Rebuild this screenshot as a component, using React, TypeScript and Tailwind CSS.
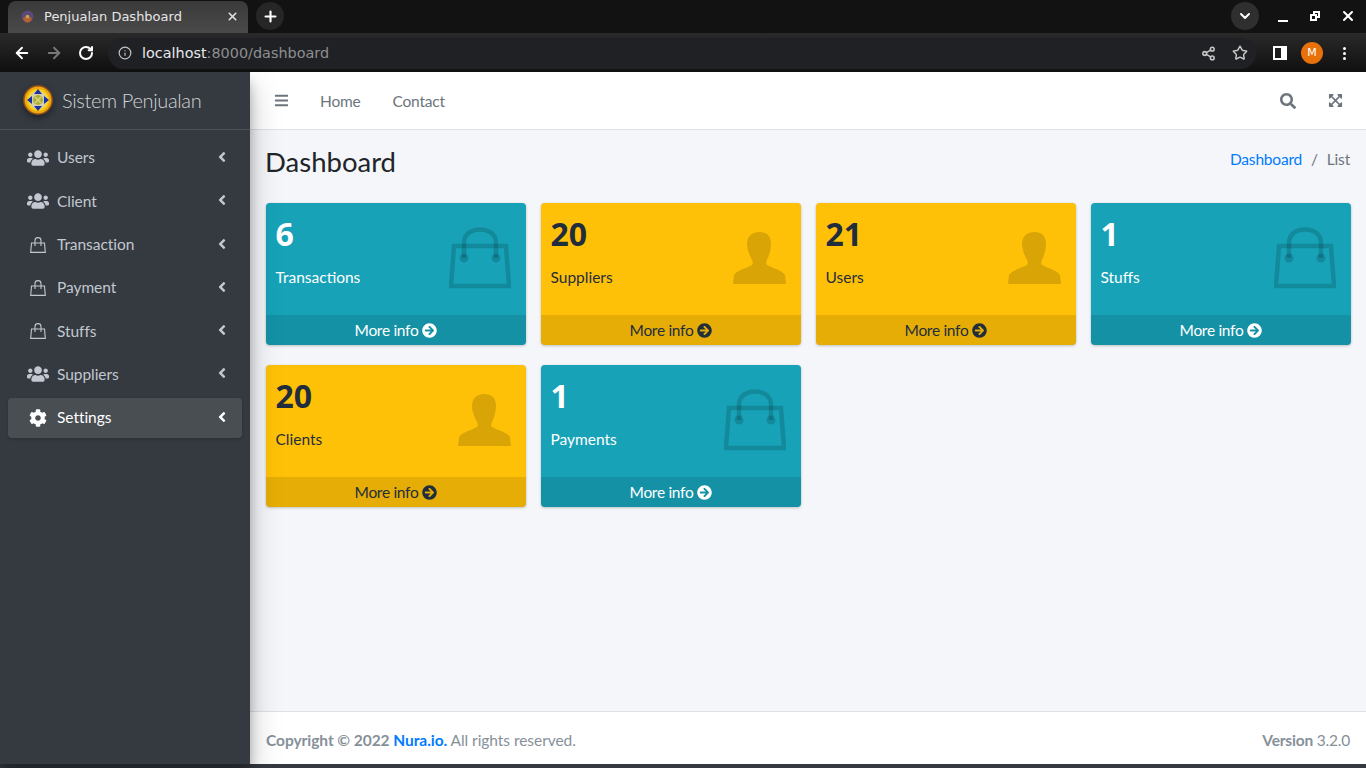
import type { ReactNode } from "react";
import {
  FaAngleLeft,
  FaArrowCircleRight,
  FaBars,
  FaCog,
  FaExpandArrowsAlt,
  FaSearch,
  FaUsers,
} from "react-icons/fa";
import { ArrowLeft, ArrowRight, ChevronDown, Info, RotateCw, Share2, Star, X, Plus } from "lucide-react";

type MenuItem = { label: string; icon: "users" | "bag" | "cog"; active?: boolean };

const menu: MenuItem[] = [
  { label: "Users", icon: "users" },
  { label: "Client", icon: "users" },
  { label: "Transaction", icon: "bag" },
  { label: "Payment", icon: "bag" },
  { label: "Stuffs", icon: "bag" },
  { label: "Suppliers", icon: "users" },
  { label: "Settings", icon: "cog", active: true },
];

type Box = { value: string; label: string; kind: "info" | "warning" };

const boxes: Box[] = [
  { value: "6", label: "Transactions", kind: "info" },
  { value: "20", label: "Suppliers", kind: "warning" },
  { value: "21", label: "Users", kind: "warning" },
  { value: "1", label: "Stuffs", kind: "info" },
  { value: "20", label: "Clients", kind: "warning" },
  { value: "1", label: "Payments", kind: "info" },
];

function MenuBagIcon() {
  return (
    <svg viewBox="0 0 16 16" className="h-[16px] w-[16px]" fill="none" stroke="currentColor" strokeWidth="1.1">
      <path d="M1.5 6h13l.8 9.4H.7z" />
      <path d="M5 9V3.5C5 1.5 6.4.6 8 .6s3 .9 3 2.9V9" />
    </svg>
  );
}

function BoxBagIcon({ className }: { className?: string }) {
  return (
    <svg viewBox="0 0 62 62" className={className} fill="none" stroke="currentColor" strokeWidth="4.5">
      <path d="M5 19h52l3 40H2z" />
      <path d="M15 31V16C15 7 22 2.500 31 2.500S47 7 47 16v15" />
      <circle cx="15" cy="31" r="4.500" fill="currentColor" stroke="none" />
      <circle cx="47" cy="31" r="4.500" fill="currentColor" stroke="none" />
    </svg>
  );
}

function PersonIcon({ className }: { className?: string }) {
  return (
    <svg viewBox="0 0 53 52" className={className} fill="currentColor">
      <path d="M26.5 0C35 0 38 5 38 12c0 6-2 12-4 16-1 2-1 4 0 5 5 3 15 5 18 10l1 9H0l1-9c3-5 13-7 18-10 1-1 1-3 0-5-2-4-5-10-5-16C14 5 18 0 26.5 0z" />
    </svg>
  );
}

function Logo() {
  return (
    <svg viewBox="0 0 30 30" className="h-[30px] w-[30px]">
      <circle cx="15" cy="15" r="15" fill="#8a4a1c" />
      <circle cx="15" cy="15" r="13.5" fill="#f0a90a" />
      <circle cx="15" cy="15" r="11" fill="#f5d21f" />
      <circle cx="15" cy="15" r="9" fill="#d9d0a8" />
      <path d="M15 4l4 5h-8zM15 26l-4-5h8zM4 15l5-4v8zM26 15l-5 4v-8z" fill="#1d2fa8" />
      <circle cx="15" cy="15" r="5" fill="#a3b045" />
      <path d="M12 12l6 6M18 12l-6 6" stroke="#e0d26a" strokeWidth="1.5" />
    </svg>
  );
}

function Favicon() {
  return (
    <svg viewBox="0 0 14 14" className="h-[13px] w-[13px]">
      <circle cx="7" cy="7" r="6.5" fill="#5b4a78" />
      <path d="M2 9c2-2 8-2 10 0-1 3-3 4.500-5 4.500S3 12 2 9z" fill="#b5622e" />
      <circle cx="7" cy="7" r="2" fill="#c9a24a" />
    </svg>
  );
}

function ChromeBar() {
  return (
    <div className="h-[72px] shrink-0 bg-[#0f0f10] font-['DejaVu_Sans',sans-serif] text-white">
      <div className="flex h-[33px] items-start bg-[#121213] pl-2">
        <div className="mt-[1px] flex h-[32px] w-[240px] items-center rounded-t-lg bg-gradient-to-b from-[#3a3a3b] to-[#4a4a4a] pb-[2px] pl-[13px] pr-[9px]">
          <Favicon />
          <span className="ml-[10px] flex-1 text-[13px] leading-none text-[#e6e6e6]">Penjualan Dashboard</span>
          <X size={13} strokeWidth={3} className="text-[#e0e0e0]" />
        </div>
        <div className="ml-[8px] mt-[2px] flex h-[28px] w-[28px] items-center justify-center rounded-full bg-[#262627]">
          <Plus size={17} strokeWidth={3} />
        </div>
        <div className="ml-auto mr-[10px] mt-[2px] flex h-[28px] items-center">
          <div className="flex h-[28px] w-[28px] items-center justify-center rounded-full bg-[#2f2f30]">
            <ChevronDown size={16} strokeWidth={3} />
          </div>
          <span className="ml-[19px] mt-[10px] h-[2px] w-[10px] bg-white" />
          <div className="relative ml-[22px] h-[10px] w-[10px]">
            <span className="absolute right-0 top-0 h-[7px] w-[7px] border-2 border-white" />
            <span className="absolute bottom-0 left-0 h-[7px] w-[7px] border-2 border-white bg-[#121213]" />
          </div>
          <X size={16} strokeWidth={3} className="ml-[20px]" />
        </div>
      </div>
      <div className="flex h-[39px] items-center bg-gradient-to-b from-[#2a2a2b] to-[#101011] pl-[13px] pt-[1px]">
        <ArrowLeft size={18} strokeWidth={2.5} />
        <ArrowRight size={18} strokeWidth={2.5} className="ml-[14px] text-[#77787a]" />
        <RotateCw size={16} strokeWidth={3} className="ml-[15px]" />
        <div className="ml-[14px] flex h-[31px] flex-1 items-center rounded-full bg-[#202124] pl-[10px] pr-[8px]">
          <Info size={14} className="text-[#c4c7c5]" />
          <span className="ml-[10px] text-[14.4px] leading-none text-[#e8eaed]">
            localhost<span className="text-[#8e8f91]">:8000/dashboard</span>
          </span>
          <Share2 size={15} strokeWidth={2.5} className="ml-auto text-[#c4c7c5]" />
          <Star size={16} strokeWidth={2.2} className="ml-[16px] text-[#c4c7c5]" />
        </div>
        <div className="ml-[17px] mr-[14px] h-[14px] w-[14px] border-2 border-r-[6px] border-white" />
        <div className="flex h-[22px] w-[22px] items-center justify-center rounded-full bg-[#e8710a] text-[11px] text-white">
          M
        </div>
        <div className="ml-[20px] mr-[20px] flex flex-col gap-[2px]">
          <span className="h-[3px] w-[3px] rounded-full bg-white" />
          <span className="h-[3px] w-[3px] rounded-full bg-white" />
          <span className="h-[3px] w-[3px] rounded-full bg-white" />
        </div>
      </div>
    </div>
  );
}

function MenuIcon({ icon }: { icon: MenuItem["icon"] }) {
  if (icon === "users") return <FaUsers size={22} />;
  if (icon === "cog") return <FaCog size={18} />;
  return <MenuBagIcon />;
}

function Sidebar() {
  return (
    <aside className="z-10 flex w-[250px] shrink-0 flex-col bg-[#343a40] shadow-[0_14px_28px_rgba(0,0,0,0.25),0_10px_10px_rgba(0,0,0,0.22)]">
      <div className="flex h-[58px] items-center border-b border-[#4b545c] pb-[1px] pl-[23px]">
        <div className="rounded-full shadow-[0_3px_6px_rgba(0,0,0,0.4)]">
          <Logo />
        </div>
        <span className="ml-[9px] text-[20px] font-light tracking-[-0.35px] text-[#d2d4d6]">Sistem Penjualan</span>
      </div>
      <nav className="flex flex-col gap-[3.3px] px-2 pt-2">
        {menu.map((item) => (
          <div
            key={item.label}
            className={`flex h-[40px] items-center rounded pl-[19px] pr-[12px] ${
              item.active ? "bg-[#494e53] text-white shadow-[0_1px_3px_rgba(0,0,0,0.2)]" : "text-[#c2c7d0]"
            }`}
          >
            <span className="flex w-[22px] justify-center">
              <MenuIcon icon={item.icon} />
            </span>
            <span className="ml-[8px] flex-1 text-[15.5px] tracking-[-0.05px]">{item.label}</span>
            <FaAngleLeft size={16} className="mb-[2px]" />
          </div>
        ))}
      </nav>
    </aside>
  );
}

function SmallBox({ value, label, kind }: Box) {
  const isInfo = kind === "info";
  return (
    <div
      className={`flex h-[142px] flex-col overflow-hidden rounded shadow-[0_0_1px_rgba(0,0,0,0.125),0_1px_3px_rgba(0,0,0,0.2)] ${
        isInfo ? "bg-[#17a2b8] text-white" : "bg-[#ffc107] text-[#1f2d3d]"
      }`}
    >
      <div className="relative flex-1 pl-[9.5px] pr-[10px] pt-[10px]">
        <div className="font-['Noto_Sans',sans-serif] text-[32px] font-bold leading-[42px]">{value}</div>
        <div className="mt-[10px] text-[15.5px] leading-[24px]">{label}</div>
        {isInfo ? (
          <BoxBagIcon className="absolute right-[15px] top-[24px] h-[62px] w-[62px] text-black/[0.15]" />
        ) : (
          <PersonIcon className="absolute right-[15px] top-[29px] h-[52px] w-[53px] text-black/[0.15]" />
        )}
      </div>
      <div
        className={`flex h-[30px] items-center justify-center gap-[4px] pt-[1px] text-[15.5px] tracking-[-0.3px] ${
          isInfo ? "bg-black/10 text-white" : "bg-black/10 text-[#1f2d3d]"
        }`}
      >
        More info <FaArrowCircleRight size={15} />
      </div>
    </div>
  );
}

function NavLink({ children }: { children: ReactNode }) {
  return <span className="text-[15.5px] tracking-[-0.2px] text-[#6c757d]">{children}</span>;
}

export default function App() {
  return (
    <div className="flex h-[768px] w-[1366px] flex-col overflow-hidden bg-[#343a40] font-['Lato','Noto_Sans',sans-serif]">
      <ChromeBar />
      <div className="flex h-[692px] shrink-0">
        <Sidebar />
        <div className="flex flex-1 flex-col bg-[#f4f6f9]">
          <header className="flex h-[58px] shrink-0 items-center border-b border-[#dee2e6] bg-white pl-[24px] pr-[23px]">
            <FaBars size={15} className="text-[#6c757d]" />
            <div className="ml-[31px] flex gap-[32px] pt-[2px]">
              <NavLink>Home</NavLink>
              <NavLink>Contact</NavLink>
            </div>
            <div className="ml-auto flex items-center gap-[32px] text-[#6c757d]">
              <FaSearch size={16} />
              <FaExpandArrowsAlt size={15} />
            </div>
          </header>
          <main className="flex-1 pl-[16px] pr-[15px]">
            <div className="flex h-[73px] items-center justify-between pb-[7px]">
              <h1 className="-ml-[1px] mb-[4px] text-[27.5px] font-normal leading-[33px] text-[#212529]">Dashboard</h1>
              <div className="mb-[6px] mr-[1px] flex gap-[9px] text-[15.5px] tracking-[-0.2px] text-[#6c757d]">
                <span className="text-[#007bff]">Dashboard</span>
                <span>/</span>
                <span>List</span>
              </div>
            </div>
            <div className="grid grid-cols-4 gap-x-[15px] gap-y-[20px]">
              {boxes.map((box) => (
                <SmallBox key={box.label} {...box} />
              ))}
            </div>
          </main>
          <footer className="flex h-[53px] shrink-0 items-center justify-between border-t border-[#dee2e6] bg-white px-[16px] pt-[6px] text-[15.5px] text-[#869099]">
            <span className="tracking-[-0.05px]">
              <b>
                Copyright © 2022 <span className="text-[#007bff]">Nura.io.</span>
              </b>{" "}
              All rights reserved.
            </span>
            <span className="tracking-[-0.2px]">
              <b>Version</b> 3.2.0
            </span>
          </footer>
        </div>
      </div>
      <div className="h-[4px] shrink-0 bg-[#343a40]" />
    </div>
  );
}
